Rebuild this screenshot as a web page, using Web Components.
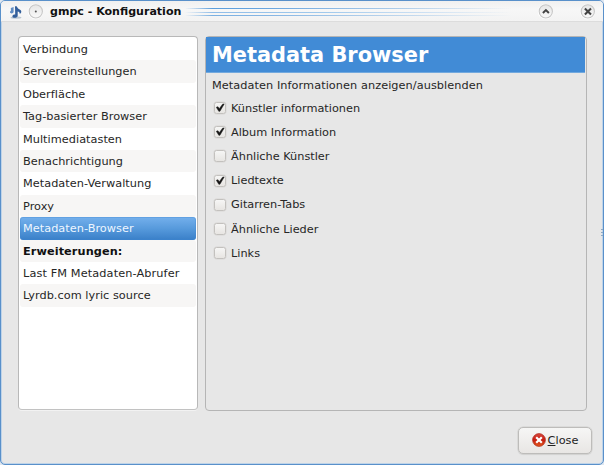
<!DOCTYPE html>
<html lang="de"><head><meta charset="utf-8"><title>gmpc - Konfiguration</title>
<style>html,body{margin:0;width:604px;height:465px;overflow:hidden;background:#dfe7f0}</style></head>
<body><config-window></config-window>
<script>
function define(name, html){
  customElements.define(name, class extends HTMLElement{
    connectedCallback(){
      if(this.shadowRoot) return;
      this.attachShadow({mode:'open'}).innerHTML = html;
    }
  });
}

define('window-button', `<style>
:host{display:block;width:15px;height:15px}svg{display:block;overflow:visible}
g{display:none}:host([kind=menu]) .menu,:host([kind=up]) .up,:host([kind=close]) .close{display:block}
</style><svg width="15" height="15" viewBox="0 0 15 15">
<defs><linearGradient id="g" x2="0" y2="1"><stop stop-color="#e6e6e6"/><stop offset="1" stop-color="#fafafa"/></linearGradient></defs>
<circle cx="7.5" cy="7.7" r="7" fill="none" stroke="#fff" stroke-width="1.2"/>
<circle cx="7.8" cy="7.4" r="6.6" fill="url(#g)" stroke="#c6c6c6" stroke-width="1.1"/>
<g class="menu"><circle cx="7.8" cy="7.5" r="1" fill="#555"/></g>
<g class="up"><path d="M4.9 8.9 7.9 6.1 10.9 8.9" fill="none" stroke="#444" stroke-width="2"/></g>
<g class="close"><path d="M4.9 4.6 11 10.4M11 4.6 4.9 10.4" fill="none" stroke="#444" stroke-width="2.1"/></g></svg>`);

define('title-bar', `<style>
:host{display:flex;align-items:center;height:21px;padding:0 8px 0 9px;box-sizing:border-box;background:linear-gradient(#f0f0f0,#f7f7f7 40%,#f3f3f3);border-bottom:1px solid #dcdcdc;font-weight:bold;font-size:11.05px;color:#111}
.note{width:13px;height:14px;margin:2px 5px 0 0}.title{margin-left:7px;white-space:nowrap;line-height:16px;padding-top:1px;width:132px}
.lines{align-self:flex-start;flex:1;margin:7px 12px 0 3px;display:grid;grid-template-rows:1px 1px 1px;row-gap:3px}
.lines i:nth-child(3){margin-top:-1px;height:1px}
.lines i{background:linear-gradient(90deg,transparent,#5b9edc 8%,#6ba6df 25%,#b2cfea 65%,transparent 96%)}
.lines i:nth-child(2){background:linear-gradient(90deg,transparent,#90bde8 8%,#a0c9ec 40%,#cce0f3 70%,transparent 96%)}
.lines i:nth-child(3){opacity:.8}
window-button:last-child{margin-left:27px}</style>
<svg class="note" viewBox="0 0 13 14"><ellipse cx="6" cy="12.6" rx="5.5" ry="1.2" fill="#bbc7d2"/><path d="M5 1.2 C8 .7 6.6 3.2 9.7 4.4 C12 5.5 11.6 7.8 9.8 9 C9.8 7.6 9 6.8 7.7 6.6V10.7 C7.5 13.3 2.6 13.6 2.4 11.4 C2.4 9.6 4.4 9.2 5.2 9.5Z" fill="#335f9b"/><path d="M.8 3 3.6 2.1V7 C3.4 8.8 0 8.9 0 7.3 C0 6.2.6 5.9 1 5.8Z" fill="#5f8cc3"/></svg>
<window-button kind="menu"></window-button><span class="title"><slot></slot></span><div class="lines"><i></i><i></i><i></i></div><window-button kind="up"></window-button><window-button kind="close"></window-button>`);

define('nav-item', `<style>
:host{display:block;box-sizing:border-box;height:22.4px;line-height:23.8px;padding-left:3.2px;white-space:nowrap;border-radius:3px}
:host(:nth-child(even)){background:#f7f6f5}
:host([heading]){font-weight:bold;background:#f7f6f5;color:#111;letter-spacing:.08px}
:host([alt=no]){background:white}:host([alt=yes]){background:#f7f6f5}
:host([wide]){letter-spacing:.11px}
:host([selected]){color:#eef6ff;background:linear-gradient(#74b0ec,#579adc 50%,#397fc8);box-shadow:inset 0 0 0 1px #3f87d155}
</style><slot></slot>`);

define('nav-list', `<style>
:host{display:block;box-sizing:border-box;width:180px;height:374px;padding:1px 1px 1px .8px;border:1px solid #b8b8b8;border-bottom-color:#c2c2c2;border-radius:4px;background:white;box-shadow:0 1px #f2f2f2;letter-spacing:.03px}
</style><slot></slot>`);

define('check-option', `<style>
:host{display:flex;align-items:center;height:24.2px;gap:5px}
.box{box-sizing:border-box;width:12px;height:12px;border:1px solid #c3c1be;border-radius:2.5px;background:linear-gradient(#f6f6f5,#e7e5e2);box-shadow:0 0 0 .5px #d9d8d6}
svg{display:none;overflow:visible}:host([checked]) svg{display:block}span{line-height:16px;white-space:nowrap;padding-top:1px}
</style><div class="box"><svg width="10" height="10" viewBox="0 0 10 10"><path d="M1.3 4.3 3 3.7 4.2 5.8 7.8 .9 9.2 1.1 4.9 8.3 3.8 8.3Z" fill="#161616" stroke="#161616" stroke-width=".5"/></svg></div><span><slot></slot></span>`);

define('settings-page', `<style>
:host{display:block;box-sizing:border-box;width:382px;height:375px;border:1px solid #b5b5b5;border-radius:4px}
h1{margin:0;height:36px;box-sizing:border-box;padding-left:6px;font:bold 20.9px/37px "DejaVu Sans",sans-serif;color:white;background:#418bd6;border-bottom:1px solid #72a9de;margin-right:1px;white-space:nowrap}
.intro{padding:5px 0 0 6px;height:19px;box-sizing:border-box;line-height:16px;white-space:nowrap;margin-bottom:4px;letter-spacing:.065px}
.options{padding-left:8px}</style>
<h1><slot name="heading"></slot></h1><div class="intro"><slot name="intro"></slot></div><div class="options"><slot></slot></div>`);

define('close-button', `<style>
:host{display:flex;align-items:center;justify-content:center;gap:2px;box-sizing:border-box;width:74px;height:27px;border:1px solid #bdbcba;border-radius:5px;background:linear-gradient(#f6f6f5,#e8e6e4);box-shadow:0 0 0 .5px #cfcfcd,0 1px 1px #d5d5d5;color:#222}
svg{display:block;margin-top:-1px}span{line-height:16px}
</style><svg width="14" height="14" viewBox="0 0 14 14"><defs><linearGradient id="r" x2="0" y2="1"><stop stop-color="#d94a3e"/><stop offset=".5" stop-color="#c51d12"/><stop offset="1" stop-color="#e25b1c"/></linearGradient></defs><circle cx="7" cy="7" r="6.4" fill="url(#r)" stroke="#ad2418" stroke-width=".7"/><path d="M4.2 4.2 9.8 9.8M9.8 4.2 4.2 9.8" stroke="#fff" stroke-width="2.2"/></svg><span><slot></slot></span>`);

define('config-window', `<style>
:host{display:flex;flex-direction:column;box-sizing:border-box;width:604px;height:465px;border:1px solid #5990ca;border-radius:5px;background:#e7e7e7;font-family:"DejaVu Sans",sans-serif;font-size:11.3px;color:#262626;box-shadow:inset 0 0 0 1px #bed3e8;overflow:hidden;position:relative}
main{display:flex;gap:7px;padding:14px 0 0 17px;height:375px;align-items:flex-start}
footer{display:flex;justify-content:flex-end;padding:16px 11px 0 0}
.grip{position:absolute;right:0;top:228px;display:grid;gap:2px}.grip i{width:2px;height:1px;background:#8fa9c3}
</style><title-bar>gmpc - Konfiguration</title-bar>
<main><nav-list>
<nav-item>Verbindung</nav-item><nav-item>Servereinstellungen</nav-item><nav-item>Oberfläche</nav-item><nav-item>Tag-basierter Browser</nav-item><nav-item>Multimediatasten</nav-item><nav-item>Benachrichtigung</nav-item><nav-item>Metadaten-Verwaltung</nav-item><nav-item>Proxy</nav-item><nav-item selected>Metadaten-Browser</nav-item><nav-item heading>Erweiterungen:</nav-item><nav-item wide alt="no">Last FM Metadaten-Abrufer</nav-item><nav-item alt="yes">Lyrdb.com lyric source</nav-item>
</nav-list><settings-page><span slot="heading">Metadata Browser</span><span slot="intro">Metadaten Informationen anzeigen/ausblenden</span>
<check-option checked>Künstler informationen</check-option><check-option checked>Album Information</check-option><check-option>Ähnliche Künstler</check-option><check-option checked>Liedtexte</check-option><check-option>Gitarren-Tabs</check-option><check-option>Ähnliche Lieder</check-option><check-option>Links</check-option>
</settings-page></main><footer><close-button><u>C</u>lose</close-button></footer><div class="grip"><i></i><i></i><i></i></div>`);
</script></body></html>
